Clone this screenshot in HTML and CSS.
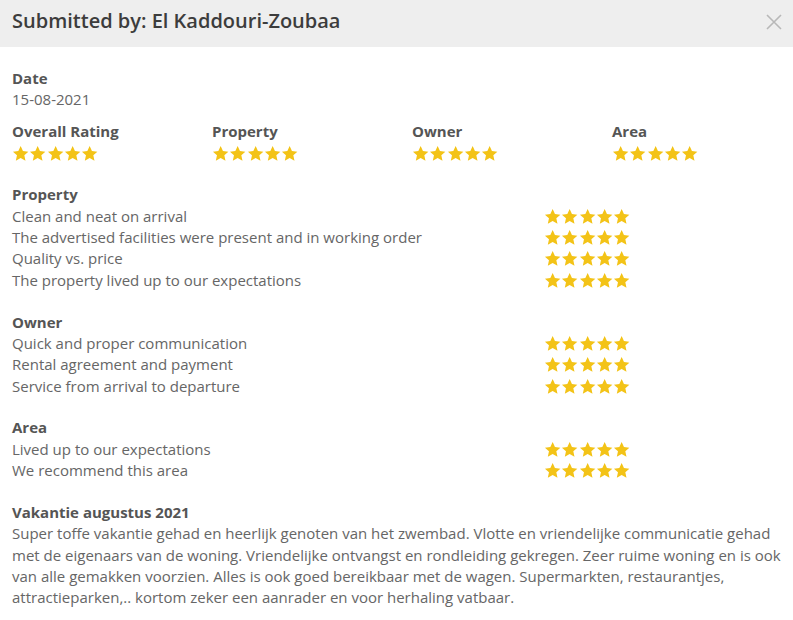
FILE: index.html
```html
<!DOCTYPE html>
<html lang="nl">
<head>
<meta charset="utf-8">
<title>Review</title>
<link rel="stylesheet" href="styles.css">
</head>
<body>
<svg width="0" height="0" class="defs">
  <defs>
    <symbol id="star" viewBox="0 0 24 24">
      <path d="M12 1.5l3.2 6.9 7.5.8-5.6 5.1 1.6 7.4L12 17.9l-6.7 3.8 1.6-7.4L1.3 9.2l7.5-.8z" fill="#f3c317"/>
    </symbol>
  </defs>
</svg>
<div class="modal">
  <div class="header">
    <h1 class="title">Submitted by: El Kaddouri-Zoubaa</h1>
    <button class="close" aria-label="Close">
      <svg width="16" height="16" viewBox="0 0 16 16"><path d="M1 1L15 15M15 1L1 15" stroke="#b8b8b8" stroke-width="1.6"/></svg>
    </button>
  </div>
  <div class="body">
    <div class="block">
      <div class="label">Date</div>
      <div class="text">15-08-2021</div>
    </div>
    <div class="summary">
      <div class="sum-item"><div class="label">Overall Rating</div><div class="stars"><svg><use href="#star"/></svg><svg><use href="#star"/></svg><svg><use href="#star"/></svg><svg><use href="#star"/></svg><svg><use href="#star"/></svg></div></div>
      <div class="sum-item"><div class="label">Property</div><div class="stars"><svg><use href="#star"/></svg><svg><use href="#star"/></svg><svg><use href="#star"/></svg><svg><use href="#star"/></svg><svg><use href="#star"/></svg></div></div>
      <div class="sum-item"><div class="label">Owner</div><div class="stars"><svg><use href="#star"/></svg><svg><use href="#star"/></svg><svg><use href="#star"/></svg><svg><use href="#star"/></svg><svg><use href="#star"/></svg></div></div>
      <div class="sum-item"><div class="label">Area</div><div class="stars"><svg><use href="#star"/></svg><svg><use href="#star"/></svg><svg><use href="#star"/></svg><svg><use href="#star"/></svg><svg><use href="#star"/></svg></div></div>
    </div>

    <div class="section">
      <div class="label">Property</div>
      <div class="row"><span class="text">Clean and neat on arrival</span><div class="stars"><svg><use href="#star"/></svg><svg><use href="#star"/></svg><svg><use href="#star"/></svg><svg><use href="#star"/></svg><svg><use href="#star"/></svg></div></div>
      <div class="row"><span class="text">The advertised facilities were present and in working order</span><div class="stars"><svg><use href="#star"/></svg><svg><use href="#star"/></svg><svg><use href="#star"/></svg><svg><use href="#star"/></svg><svg><use href="#star"/></svg></div></div>
      <div class="row"><span class="text">Quality vs. price</span><div class="stars"><svg><use href="#star"/></svg><svg><use href="#star"/></svg><svg><use href="#star"/></svg><svg><use href="#star"/></svg><svg><use href="#star"/></svg></div></div>
      <div class="row"><span class="text">The property lived up to our expectations</span><div class="stars"><svg><use href="#star"/></svg><svg><use href="#star"/></svg><svg><use href="#star"/></svg><svg><use href="#star"/></svg><svg><use href="#star"/></svg></div></div>
    </div>

    <div class="section">
      <div class="label">Owner</div>
      <div class="row"><span class="text">Quick and proper communication</span><div class="stars"><svg><use href="#star"/></svg><svg><use href="#star"/></svg><svg><use href="#star"/></svg><svg><use href="#star"/></svg><svg><use href="#star"/></svg></div></div>
      <div class="row"><span class="text">Rental agreement and payment</span><div class="stars"><svg><use href="#star"/></svg><svg><use href="#star"/></svg><svg><use href="#star"/></svg><svg><use href="#star"/></svg><svg><use href="#star"/></svg></div></div>
      <div class="row"><span class="text">Service from arrival to departure</span><div class="stars"><svg><use href="#star"/></svg><svg><use href="#star"/></svg><svg><use href="#star"/></svg><svg><use href="#star"/></svg><svg><use href="#star"/></svg></div></div>
    </div>

    <div class="section">
      <div class="label">Area</div>
      <div class="row"><span class="text">Lived up to our expectations</span><div class="stars"><svg><use href="#star"/></svg><svg><use href="#star"/></svg><svg><use href="#star"/></svg><svg><use href="#star"/></svg><svg><use href="#star"/></svg></div></div>
      <div class="row"><span class="text">We recommend this area</span><div class="stars"><svg><use href="#star"/></svg><svg><use href="#star"/></svg><svg><use href="#star"/></svg><svg><use href="#star"/></svg><svg><use href="#star"/></svg></div></div>
    </div>

    <div class="section">
      <div class="label">Vakantie augustus 2021</div>
      <p class="text review">Super toffe vakantie gehad en heerlijk genoten van het zwembad. Vlotte en vriendelijke communicatie gehad met de eigenaars van de woning. Vriendelijke ontvangst en rondleiding gekregen. Zeer ruime woning en is ook van alle gemakken voorzien. Alles is ook goed bereikbaar met de wagen. Supermarkten, restaurantjes, attractieparken,.. kortom zeker een aanrader en voor herhaling vatbaar.</p>
    </div>
  </div>
</div>
</body>
</html>
```

FILE: styles.css
```css
html, body {
  margin: 0;
  padding: 0;
  background: #ffffff;
}

body {
  font-family: "Open Sans", "Liberation Sans", sans-serif;
  font-size: 15px;
  line-height: 21.33px;
  color: #666666;
}

.defs {
  position: absolute;
  width: 0;
  height: 0;
}

.modal {
  width: 793px;
}

.header {
  background: #eeeeee;
  height: 47px;
  display: flex;
  align-items: center;
  justify-content: space-between;
  padding: 0 12px;
  box-sizing: border-box;
}

.title {
  margin: 0;
  font-size: 20px;
  font-weight: 600;
  color: #3c3c3c;
  line-height: 26px;
  position: relative;
  top: -3px;
}

.close {
  background: none;
  border: 0;
  padding: 0;
  margin-right: -1px;
  display: flex;
  position: relative;
  top: -2px;
}

.body {
  padding: 21px 12px 12px;
}

.label {
  font-weight: 700;
  color: #555555;
}

.text {
  color: #666666;
}

.summary {
  display: grid;
  grid-template-columns: repeat(4, 200px);
  margin-top: 10.67px;
}

.stars {
  display: flex;
  align-items: center;
  height: 21.33px;
}

.stars svg {
  width: 17.3px;
  height: 17.3px;
  flex: none;
}

.section {
  margin-top: 20.5px;
}

.row {
  display: grid;
  grid-template-columns: 532px auto;
}

.review {
  margin: 0;
}
```
